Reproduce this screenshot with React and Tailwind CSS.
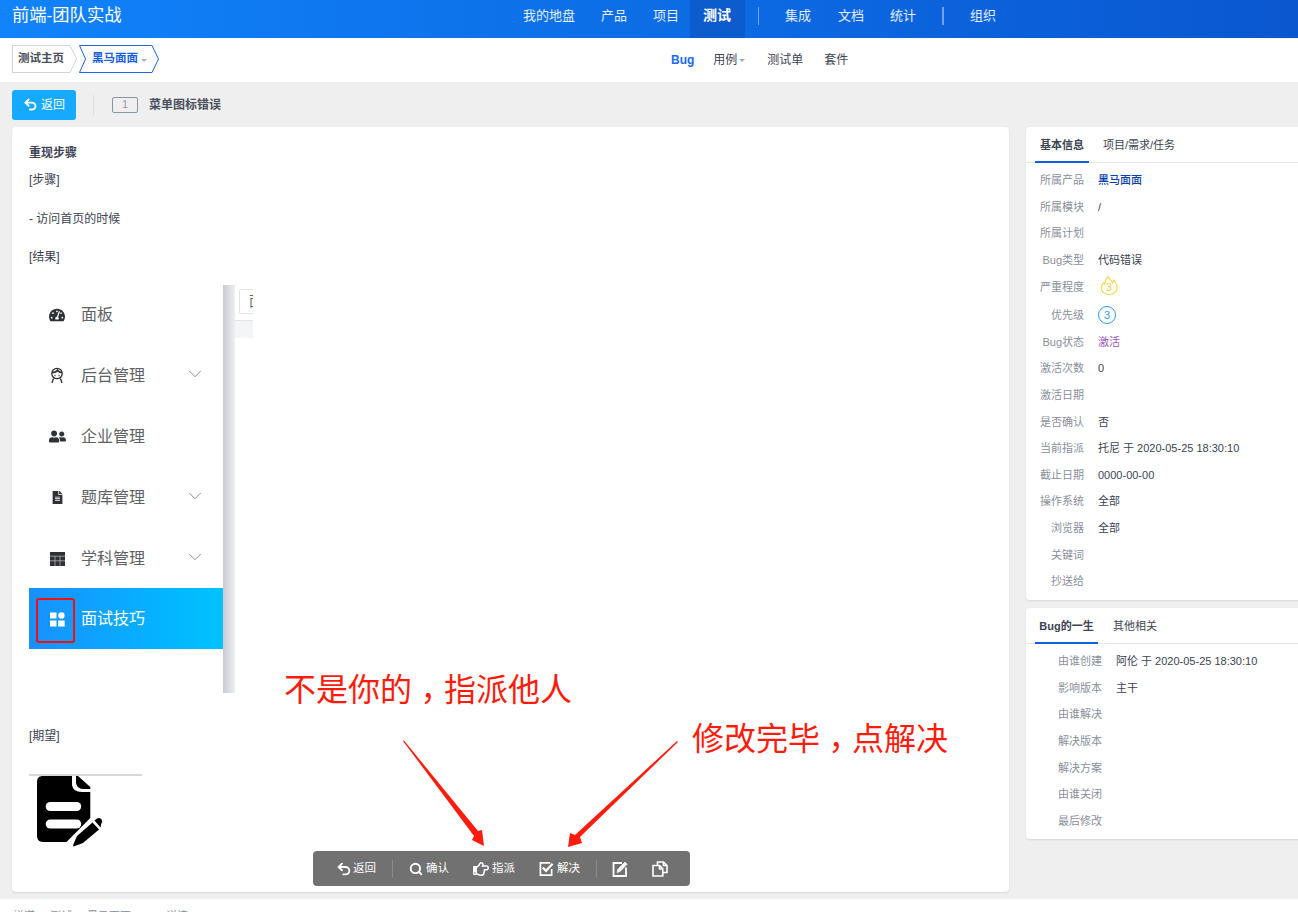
import React from "react";
import { Undo2, Search, ChevronDown } from "lucide-react";
import { FaRegHandPointRight, FaTachometerAlt, FaUserFriends, FaFileAlt } from "react-icons/fa";

const font = { fontFamily: '"Liberation Sans","Noto Sans CJK SC",sans-serif' };

function Face() {
  return (
    <svg width="16" height="17" viewBox="0 0 16 17" fill="none" stroke="#303133" strokeWidth="1.3">
      <circle cx="8" cy="6.500" r="5.200" />
      <path d="M3 5.500c2.500 0 4.500-.8 5.500-2.300 1 1.500 2.500 2.300 4.500 2.300" strokeWidth="1.700" />
      <path d="M4.500 11.500l-1.500 4.500M11.500 11.500l1.500 4.500" />
      <path d="M5.500 8.500h1M9.500 8.500h1" />
    </svg>
  );
}

function Tiles() {
  return (
    <svg width="15" height="15" viewBox="0 0 15 15" fill="#fff">
      <rect x="0" y="0.5" width="6.5" height="6" />
      <circle cx="11.4" cy="3.5" r="3.2" />
      <rect x="0" y="8.5" width="6.5" height="6" />
      <rect x="8.2" y="8.5" width="6.5" height="6" />
    </svg>
  );
}

function TableIcon() {
  return (
    <svg width="15" height="14" viewBox="0 0 15 14">
      <rect x="0" y="0" width="15" height="14" fill="#303133" />
      <path d="M0 4.200H15M0 8.800H15M5 4.200V14M10 4.200V14" stroke="#fff" strokeWidth="0.7" opacity="0.7" />
    </svg>
  );
}

function MenuRow({ icon, label, chevron, active }) {
  return (
    <div className={active
      ? "relative flex h-[61px] items-center bg-gradient-to-r from-[#1890ff] to-[#00c3ff] pt-[1px] text-white"
      : "flex h-[61px] items-center pt-[2px] text-[#606266]"}>
      <div className="flex w-[52px] justify-center pl-[4px]">{icon}</div>
      <span className="text-[16px] leading-none">{label}</span>
      {chevron && <ChevronDown size={22} strokeWidth={1} className="mb-[3px] ml-auto mr-[17px] text-[#7f848c]" />}
      {active && <div className="absolute left-[7px] top-[10px] h-[45px] w-[39px] rounded-[3px] border-[2px] border-[#f01010]" />}
    </div>
  );
}

function InfoRow({ label, value, wide, tall, valueClass }) {
  return (
    <div className={`flex items-center ${tall ? "h-[27.5px]" : "h-[26.65px]"}`}>
      <div className={`${wide ? "w-[76px]" : "w-[58px]"} shrink-0 text-right text-[#8a8f9c]`}>{label}</div>
      <div className={`ml-[14px] ${valueClass || "text-[#3c4353]"}`}>{value}</div>
    </div>
  );
}

function Tabs({ first, second, firstWidth, secondGap }) {
  return (
    <div className="flex h-[36px] border-b-[1px] border-[#e4e4e4] pl-[9px] font-normal">
      <div className={`mb-[-1px] flex h-[36px] items-center justify-center border-b-[2px] border-[#0c60e1] pt-[3px] font-bold text-[#3c4353] ${firstWidth}`}>{first}</div>
      <div className={`flex items-center pt-[2px] text-[#3c4353] ${secondGap}`}>{second}</div>
    </div>
  );
}

function Crumb({ w, blue, children }) {
  const c = blue ? "#1a66e0" : "#d0d3da";
  const path = blue
    ? `M0.5 0.5H${w - 7}L${w - 0.5} 14L${w - 7} 27.5H0.5L6.5 14Z`
    : `M0.5 0.5H${w - 7}L${w - 0.5} 14L${w - 7} 27.5H0.5Z`;
  return (
    <div className="relative flex h-[28px] items-center" style={{ width: w }}>
      <svg className="absolute left-0 top-0" width={w} height="28" fill="#fff" stroke={c}><path d={path} /></svg>
      <div className="relative flex items-center">{children}</div>
    </div>
  );
}

function ToolItem({ icon, label, className }) {
  return (
    <div className={`flex items-center ${className || ""}`}>
      {icon}
      {label && <span className="ml-[3px]">{label}</span>}
    </div>
  );
}

function CheckIcon() {
  return (
    <svg width="15" height="16" viewBox="0 0 16 16" fill="none" stroke="#fff">
      <path d="M13.500 8V14.500H1.500V1.500H12" strokeWidth="1.800" />
      <path d="M4 6.500L7.500 10L14.500 2.500" strokeWidth="2.400" />
    </svg>
  );
}

function EditIcon() {
  return (
    <svg width="16" height="16" viewBox="0 0 16 16" fill="none" stroke="#fff">
      <path d="M10 2H1.500V15H14V6.500" strokeWidth="1.800" />
      <path d="M5 11.500L5.800 8.300L13 1L15.200 3.200L8 10.600Z" fill="#fff" strokeWidth="0.6" />
    </svg>
  );
}

function CopyIcon() {
  return (
    <svg width="16" height="16" viewBox="0 0 16 16" fill="none" stroke="#fff" strokeWidth="1.600">
      <path d="M1 4.500H7.500L10.800 7.800V15H1Z" />
      <path d="M7 8H10.500M7.500 4.500V8" />
      <path d="M5.500 4.200V1H11.500L15 4.500V11.500H11" />
      <path d="M11.500 1V4.500H15" />
    </svg>
  );
}

function NoteIcon() {
  return (
    <svg width="66" height="72" viewBox="0 0 66 72" className="block">
      <path fill="#000" d="M6 0H35V8C35 13 39 16 45 16H53.300V42L29.500 66H6C2 66 0 63 0 60V6C0 2 2 0 6 0Z" />
      <path fill="#000" d="M39 0H41L53.300 11V13H46C42 13 39 10 39 6Z" />
      <rect x="8.700" y="26" width="35.500" height="9" rx="4.500" fill="#fff" />
      <rect x="8.700" y="43.500" width="35.500" height="9" rx="4.500" fill="#fff" />
      <path fill="#000" d="M36.500 70.500C36 70.500 36 69.500 36.500 68L40 60L55.500 46.500L62 53.500L46 67Z" />
      <path fill="#000" d="M57.500 44.500L60 42.500C61.500 41.500 63 41.800 64.300 43.200C65.500 44.500 65.500 46 64.300 47.500L63.500 51.500Z" />
    </svg>
  );
}

export default function App() {
  return (
    <div className="flex h-[912px] w-full flex-col overflow-hidden bg-[#efefef] text-[12px] text-[#3c4353]" style={font}>
      <header className="flex h-[38px] shrink-0 items-center bg-gradient-to-r from-[#1183fb] to-[#0b57d0] text-white">
        <div className="ml-[12px] w-[498px] pb-[6px] text-[17.3px] leading-none">前端-团队实战</div>
        <nav className="flex h-full items-center text-[13px] text-[#e4eeff]">
          <div className="px-[13px] pb-[7px]">我的地盘</div>
          <div className="px-[13px] pb-[7px]">产品</div>
          <div className="px-[13px] pb-[7px]">项目</div>
          <div className="ml-[-2px] flex h-[38px] items-center bg-[#0d5ccd] pb-[7px] pl-[13px] pr-[14px] text-[14px] font-bold text-white">测试</div>
          <div className="mx-[13px] mb-[6px] h-[18px] w-[1px] bg-[#6fa3ee]" />
          <div className="px-[13px] pb-[7px]">集成</div>
          <div className="ml-[1px] px-[13px] pb-[7px]">文档</div>
          <div className="px-[13px] pb-[7px]">统计</div>
          <div className="mx-[13px] mb-[6px] h-[18px] w-[2px] bg-[#6fa3ee]" />
          <div className="px-[13px] pb-[7px]">组织</div>
        </nav>
      </header>

      <div className="flex h-[44px] shrink-0 items-center bg-white pl-[12px]">
        <div className="mb-[2px] flex items-center">
          <Crumb w={65}><span className="ml-[6px] text-[11.5px] font-bold text-[#4a4f5c]">测试主页</span></Crumb>
          <div className="ml-[2px]">
            <Crumb w={80} blue>
              <span className="ml-[13px] text-[11.5px] font-bold text-[#1a5fdc]">黑马面面</span>
              <span className="ml-[3px] mt-[2px] h-0 w-0 border-x-[3px] border-t-[3px] border-x-transparent border-t-[#a9b4c6]" />
            </Crumb>
          </div>
        </div>
        <div className="ml-[512px] flex items-center">
          <span className="font-bold text-[#1a6ae6]">Bug</span>
          <span className="ml-[19px]">用例</span>
          <span className="ml-[2px] h-0 w-0 border-x-[3px] border-t-[3px] border-x-transparent border-t-[#a5a8b0]" />
          <span className="ml-[22px]">测试单</span>
          <span className="ml-[21px]">套件</span>
        </div>
      </div>

      <div className="flex h-[45px] shrink-0 items-center pl-[12px]">
        <button className="flex h-[30px] w-[64px] items-center justify-center rounded-[3px] bg-[#15a9ff] text-white">
          <Undo2 size={15} strokeWidth={3} />
          <span className="ml-[3px] text-[12px]">返回</span>
        </button>
        <div className="ml-[17px] h-[20px] w-[1px] bg-[#dcdcdc]" />
        <div className="ml-[18px] flex h-[16px] w-[26px] items-center justify-center rounded-[2px] border border-[#8d93a0] text-[10px] text-[#8d93a0]">1</div>
        <div className="ml-[11px] font-bold text-[#4a4f5c]">菜单图标错误</div>
      </div>

      <main className="flex min-h-0 flex-1 pl-[12px]">
        <section className="relative h-[765px] w-[997px] shrink-0 rounded-[4px] bg-white px-[17px] pt-[18px] shadow-[0_1px_2px_rgba(0,0,0,0.1)]">
          <div className="font-bold leading-[16px]">重现步骤</div>
          <p className="mt-[11px] leading-[16px]">[步骤]</p>
          <p className="mt-[23px] leading-[16px]">- 访问首页的时候</p>
          <p className="mt-[22px] leading-[16px]">[结果]</p>

          <div className="mt-[20px] flex h-[408px] w-[224px] overflow-hidden">
            <div className="mt-[-2px] w-[194px] shrink-0">
              <MenuRow icon={<FaTachometerAlt size={16} color="#303133" />} label="面板" />
              <MenuRow icon={<Face />} label="后台管理" chevron />
              <MenuRow icon={<FaUserFriends size={17} color="#303133" />} label="企业管理" />
              <MenuRow icon={<FaFileAlt size={13} color="#303133" />} label="题库管理" chevron />
              <MenuRow icon={<TableIcon />} label="学科管理" chevron />
              <MenuRow icon={<Tiles />} label="面试技巧" active />
            </div>
            <div className="w-[12px] shrink-0 bg-gradient-to-r from-[#c9cbd1] to-[#eeeff2]" />
            <div className="flex-1">
              <div className="h-[36px] border-b border-[#e3e4e8] bg-white pl-[4px] pt-[4px]">
                <div className="flex h-[25px] w-[30px] items-center rounded-l-[2px] border border-[#e4e4e4] pl-[9px] text-[14px] text-[#606266]">面</div>
              </div>
              <div className="h-[17px] bg-[#f4f5f7]" />
              <div className="h-full bg-white" />
            </div>
          </div>

          <p className="mt-[35px] leading-[16px]">[期望]</p>
          <div className="mt-[30px] h-[2px] w-[113px] bg-[#d8d8d8]" />
          <div className="ml-[8px]"><NoteIcon /></div>

          <div className="absolute left-[272px] top-[540px] text-[32px] leading-[40px] text-[#ff1c0d]">不是你的<span className="inline-block translate-y-[9px] font-['Noto_Sans_CJK_TC']">，</span>指派他人</div>
          <div className="absolute left-[680px] top-[589px] text-[32px] leading-[40px] text-[#ff1c0d]">修改完毕<span className="inline-block translate-y-[9px] font-['Noto_Sans_CJK_TC']">，</span>点解决</div>
          <svg className="absolute left-[380px] top-[610px]" width="300" height="115" viewBox="0 0 300 115" fill="#ff1c0d">
            <path d="M11 4L12 3.500L86 94L90 93L92 109L80 103L82 99Z" />
            <path d="M285 4L286 5L188 100L190 106L176 110L178 96L183 98Z" />
          </svg>

          <div className="absolute left-[301px] top-[724px] flex h-[35px] w-[377px] items-center rounded-[4px] bg-[#717171] text-[11.5px] text-white">
            <div className="ml-[23px] flex items-center">
              <Undo2 size={16} strokeWidth={2.8} />
              <span className="ml-[1px]">返回</span>
            </div>
            <div className="ml-[16px] h-[18px] w-[1px] bg-[#8a8a8a]" />
            <ToolItem className="ml-[16px]" icon={<Search size={14} strokeWidth={3.2} />} label="确认" />
            <ToolItem className="ml-[24px]" icon={<FaRegHandPointRight size={16} />} label="指派" />
            <ToolItem className="ml-[24px]" icon={<CheckIcon />} label="解决" />
            <div className="ml-[16px] h-[18px] w-[1px] bg-[#8a8a8a]" />
            <ToolItem className="ml-[15px]" icon={<EditIcon />} />
            <ToolItem className="ml-[24px]" icon={<CopyIcon />} />
          </div>
        </section>

        <aside className="ml-[17px] flex w-[290px] shrink-0 flex-col text-[11px]">
          <div className="h-[473px] rounded-[4px] bg-white shadow-[0_1px_2px_rgba(0,0,0,0.1)]">
            <Tabs first="基本信息" second="项目/需求/任务" firstWidth="w-[54px]" secondGap="ml-[14px]" />
            <div className="pt-[4px]">
              <InfoRow label="所属产品" value="黑马面面" valueClass="font-medium text-[#0a3ea8]" />
              <InfoRow label="所属模块" value="/" />
              <InfoRow label="所属计划" value="" />
              <InfoRow label="Bug类型" value="代码错误" />
              <InfoRow tall label="严重程度" value={
                <div className="relative ml-[2px] mt-[-3px] h-[21px] w-[18px]">
                  <svg width="18" height="21" viewBox="0 0 20 22" fill="none" stroke="#f7d64a" strokeWidth="1.2">
                    <path d="M9 1C10 5 13 5 14 8C15 7 15 6 15 5C18 8 19 11 19 13.500C19 18 15 21 10 21C5 21 1.500 18 1.500 13.500C1.500 11 3 9 4 8C4.500 9 5 10 5.500 10C5.500 6.500 7 3 9 1Z" />
                  </svg>
                  <span className="absolute inset-x-0 top-[7px] text-center text-[10px] leading-[12px] text-[#f3c93a]">3</span>
                </div>
              } />
              <InfoRow tall label="优先级" value={
                <div className="flex h-[18px] w-[18px] items-center justify-center rounded-full border border-[#2e9bec] text-[11px] text-[#2e9bec]">3</div>
              } />
              <InfoRow label="Bug状态" value="激活" valueClass="text-[#9b59b6]" />
              <InfoRow label="激活次数" value="0" />
              <InfoRow label="激活日期" value="" />
              <InfoRow label="是否确认" value="否" />
              <InfoRow label="当前指派" value="托尼 于 2020-05-25 18:30:10" />
              <InfoRow label="截止日期" value="0000-00-00" />
              <InfoRow label="操作系统" value="全部" />
              <InfoRow label="浏览器" value="全部" />
              <InfoRow label="关键词" value="" />
              <InfoRow label="抄送给" value="" />
            </div>
          </div>
          <div className="mt-[8px] h-[231px] rounded-[4px] bg-white shadow-[0_1px_2px_rgba(0,0,0,0.1)]">
            <Tabs first="Bug的一生" second="其他相关" firstWidth="w-[63px]" secondGap="ml-[15px]" />
            <div className="pt-[4px]">
              <InfoRow wide label="由谁创建" value="阿伦 于 2020-05-25 18:30:10" />
              <InfoRow wide label="影响版本" value="主干" />
              <InfoRow wide label="由谁解决" value="" />
              <InfoRow wide label="解决版本" value="" />
              <InfoRow wide label="解决方案" value="" />
              <InfoRow wide label="由谁关闭" value="" />
              <InfoRow wide label="最后修改" value="" />
            </div>
          </div>
        </aside>
      </main>

      <footer className="flex h-[13px] shrink-0 items-start bg-white pl-[13px] pt-[9px] text-[11px] text-[#8a8f9c]">
        <span className="w-[37px]">禅道</span><span className="w-[37px]">测试</span><span className="w-[79px]">黑马面面</span><span>详情</span>
      </footer>
    </div>
  );
}
